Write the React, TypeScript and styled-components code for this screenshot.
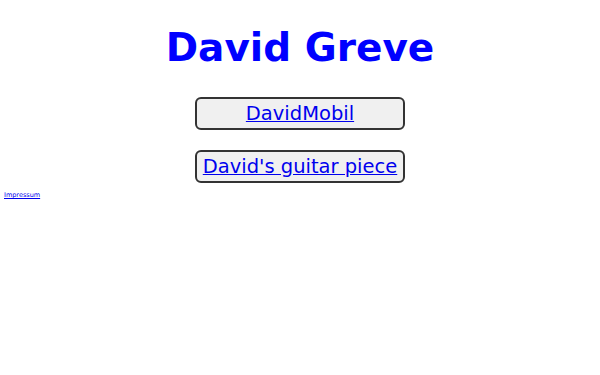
import React from 'react'
import styled, { createGlobalStyle } from 'styled-components'

const GlobalStyle = createGlobalStyle`
	body {
		margin: 0;
		background: #ffffff;
		font-family: 'DejaVu Sans', sans-serif;
	}
`

const Page = styled.div`
	display: flex;
	flex-direction: column;
	padding: 24px 4px 0 4px;
`

const Title = styled.h1`
	margin: 0;
	text-align: center;
	color: #0000ff;
	font-size: 39px;
	font-weight: 700;
	line-height: 48px;
`

const LinkList = styled.div`
	display: flex;
	flex-direction: column;
	align-items: center;
	gap: 20px;
	margin-top: 25px;
`

const LinkButton = styled.div`
	box-sizing: border-box;
	width: 210px;
	height: 33px;
	display: flex;
	align-items: center;
	justify-content: center;
	background: #f0f0f0;
	border: 2px solid #333333;
	border-radius: 6px;
	white-space: nowrap;
`

const ButtonLink = styled.a`
	color: #0000ee;
	font-size: 19.5px;
	text-decoration: underline;
`

const Footer = styled.div`
	margin-top: 4px;
	line-height: 10px;
`

const SmallLink = styled.a`
	color: #0000ee;
	font-size: 6.5px;
	text-decoration: underline;
`

export default function App() {
	return (
		<>
			<GlobalStyle />
			<Page>
				<Title>David Greve</Title>
				<LinkList>
					<LinkButton>
						<ButtonLink href="#">DavidMobil</ButtonLink>
					</LinkButton>
					<LinkButton>
						<ButtonLink href="#">David's guitar piece</ButtonLink>
					</LinkButton>
				</LinkList>
				<Footer>
					<SmallLink href="#">Impressum</SmallLink>
				</Footer>
			</Page>
		</>
	)
}
